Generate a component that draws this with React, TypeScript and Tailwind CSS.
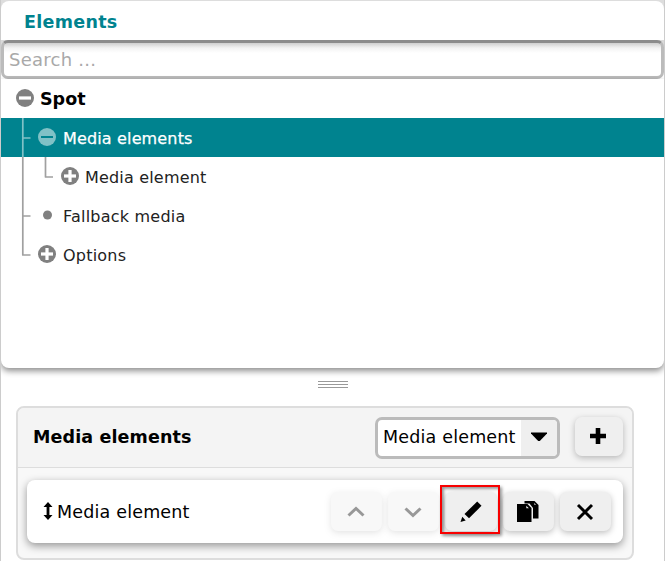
import type { ReactNode } from "react";

type Glyph = "plus" | "minus" | "dot";

function NodeIcon({ glyph, light }: { glyph: Glyph; light?: boolean }) {
  const fill = light ? "#80c1c6" : "#808080";
  const mark = light ? "#00838f" : "#ffffff";
  return (
    <svg width="18" height="18" viewBox="0 0 18 18" className="mb-[2px] shrink-0">
      {glyph === "dot" ? (
        <circle cx="9.5" cy="9" r="4.5" fill={fill} />
      ) : (
        <>
          <circle cx="9" cy="9" r="9" fill={fill} />
          <rect x="3" y={light ? 8 : 7.4} width="12" height={light ? 2 : 3.2} fill={mark} />
          {glyph === "plus" && <rect x="7.4" y="3" width="3.2" height="12" fill={mark} />}
        </>
      )}
    </svg>
  );
}

function TreeLine({ d, light }: { d: string; light?: boolean }) {
  return (
    <svg width="31" height="39" viewBox="0 0 31 39" fill="none" className="shrink-0">
      <path d={d} stroke={light ? "#80c1c6" : "#a0a0a0"} strokeWidth="1.7" strokeLinejoin="round" />
    </svg>
  );
}

function IconButton({ children, className = "" }: { children: ReactNode; className?: string }) {
  return (
    <button
      className={`flex h-[39px] shrink-0 items-center justify-center rounded-[7px] bg-[#efefef] shadow-[0_2px_6px_rgba(0,0,0,0.25)] ${className}`}
    >
      {children}
    </button>
  );
}

export default function App() {
  return (
    <div className="h-[561px] w-[665px] overflow-hidden border-x border-[#cccccc] bg-white font-['DejaVu_Sans',sans-serif] text-base text-black">
      <div className="bg-[#dddddd] pt-px">
        <div className="h-[39px] rounded-t-[8px] bg-white pl-[23px] text-[17.5px] leading-[43px] font-bold tracking-[0.3px] text-[#00838f]">
          Elements
        </div>
      </div>
      <div className="bg-white">
        <div className="h-[39px] bg-[linear-gradient(#dadada_0,#dadada_6px,#fff_7px)]">
          <div className="flex h-[39px] items-center rounded-[7px] border-[3px] border-[#bbbbbb] border-t-[#8c8c8c] bg-[linear-gradient(#cfcfcf,#f3f3f3_5px,#fff_10px)] pl-[5px] text-[18px] tracking-[0.25px] text-[#a9a9a9]">
            Search ...
          </div>
        </div>
      </div>
      <div className="h-[289px] rounded-b-[8px] bg-white shadow-[0_3px_6px_rgba(0,0,0,0.45)]">
        <div className="flex h-[39px] items-center pl-[15px]">
          <NodeIcon glyph="minus" />
          <span className="ml-[6px] pt-px text-[17.5px] font-bold">Spot</span>
        </div>
        <div className="flex h-[39px] items-center bg-[#00838f] text-white">
          <TreeLine d="M21.8 0V39M22 20H29.5" light />
          <span className="ml-[6px] flex items-center gap-[7px]">
            <NodeIcon glyph="minus" light />
            <span className="pt-[2px] text-[16px] tracking-[0.15px] [-webkit-text-stroke:0.25px_white]">Media elements</span>
          </span>
        </div>
        <div className="flex h-[39px] items-center text-[#222222]">
          <svg width="53" height="39" viewBox="0 0 53 39" fill="none" className="shrink-0">
            <path d="M21.8 0V39M44.5 0V20H52" stroke="#a0a0a0" strokeWidth="1.7" strokeLinejoin="round" />
          </svg>
          <span className="ml-[7px] flex items-center gap-[6px]">
            <NodeIcon glyph="plus" />
            <span className="pt-[2px] text-[16px] tracking-[0.18px]">Media element</span>
          </span>
        </div>
        <div className="flex h-[39px] items-center text-[#222222]">
          <TreeLine d="M21.8 0V39M22 20H29.5" />
          <span className="ml-[6px] flex items-center gap-[7px]">
            <NodeIcon glyph="dot" />
            <span className="pt-[2px] text-[16px] tracking-[0.22px]">Fallback media</span>
          </span>
        </div>
        <div className="flex h-[39px] items-center text-[#222222]">
          <TreeLine d="M21.8 0V20H29.5" />
          <span className="ml-[6px] flex items-center gap-[7px]">
            <NodeIcon glyph="plus" />
            <span className="pt-[2px] text-[16px] tracking-[0.22px]">Options</span>
          </span>
        </div>
      </div>
      <div className="flex h-[38px] justify-center pt-[13px]">
        <div className="h-[7px] w-[30px] border-y border-[#999999]">
          <div className="mt-[2px] h-px bg-[#999999]" />
        </div>
      </div>
      <div className="ml-[15px] h-[154px] w-[618px] rounded-[8px] border-2 border-[#dddddd] bg-[#f8f8f8]">
        <div className="flex h-[60px] items-center rounded-t-[6px] border-b border-[#dddddd] bg-[#f4f4f4] pr-[9px] pl-[15px]">
          <span className="flex-1 text-[17.5px] font-bold tracking-[0.13px]">Media elements</span>
          <div className="mt-px flex h-[42px] w-[185px] overflow-hidden rounded-[7px] border-[3px] border-[#bbbbbb] bg-white">
            <span className="w-[143px] pl-[5px] text-[17.5px] leading-[34px] tracking-[0.18px] whitespace-nowrap">Media element</span>
            <span className="flex flex-1 items-center justify-center bg-[#efefef] pb-[2px]">
              <svg width="18" height="10" viewBox="0 0 18 10">
                <path d="M1 .5H17V1.5L9.8 9H8.2L1 1.5Z" fill="#000" />
              </svg>
            </span>
          </div>
          <IconButton className="mb-[2px] ml-[15px] w-[48px]">
            <svg width="18" height="18" viewBox="0 0 18 18" className="mb-[2px] -ml-[2px]">
              <path d="M6.7 1H11.3V6.7H17V11.3H11.3V17H6.7V11.3H1V6.7H6.7Z" fill="#000" />
            </svg>
          </IconButton>
        </div>
        <div className="mx-[9px] mt-[12px] flex h-[63px] items-center rounded-[8px] bg-white pr-[12px] pl-[16px] shadow-[0_3px_8px_rgba(0,0,0,0.4)]">
          <svg width="10" height="18" viewBox="0 0 10 18" className="mb-px shrink-0">
            <path d="M5 0L9.5 5H6.4V13H9.5L5 18L.5 13H3.6V5H.5Z" fill="#000" />
          </svg>
          <span className="ml-[4px] flex-1 pt-px text-[17.5px] tracking-[0.18px] whitespace-nowrap">Media element</span>
          <div className="flex gap-[6px]">
            <IconButton className="w-[51px] opacity-40">
              <svg width="18" height="12" viewBox="0 0 18 12" fill="none" className="-ml-px">
                <path d="M1.5 9.5L9 2.5L16.5 9.5" stroke="#000" strokeWidth="3" />
              </svg>
            </IconButton>
            <IconButton className="w-[51px] opacity-40">
              <svg width="18" height="12" viewBox="0 0 18 12" fill="none" className="-ml-px">
                <path d="M1.5 2.5L9 9.5L16.5 2.5" stroke="#000" strokeWidth="3" />
              </svg>
            </IconButton>
            <div className="relative">
              <IconButton className="w-[52px]">
                <svg width="24" height="24" viewBox="0 0 24 24">
                  <path d="M18.2 1.5L22.5 5.8L10 18.3L5.5 14Z" fill="#000" />
                  <path d="M3.3 16.8L1.5 22L6.7 20.5Z" fill="#000" />
                </svg>
              </IconButton>
              <div className="absolute -top-[7px] -left-[5px] h-[49px] w-[60px] border-2 border-[#f80000] shadow-[2px_2px_3px_rgba(0,0,0,0.4),inset_2px_2px_3px_rgba(0,0,0,0.4)]" />
            </div>
            <IconButton className="w-[51px]">
              <svg width="24" height="24" viewBox="0 0 24 24" className="-ml-px">
                <path d="M8.5 1H18.5L22.5 5V18.5H17V8L13.5 3.5H8.5Z" fill="#000" />
                <path d="M1 4H11.5L15.5 8V22H1Z" fill="#000" />
                <path d="M10.3 5.7V8.3H12.9ZM18.3 3V4.7H20Z" fill="#efefef" />
              </svg>
            </IconButton>
            <IconButton className="w-[51px]">
              <svg width="18" height="18" viewBox="0 0 18 18" fill="none" className="-ml-px">
                <path d="M2 2L16 16M16 2L2 16" stroke="#000" strokeWidth="2.9" />
              </svg>
            </IconButton>
          </div>
        </div>
      </div>
    </div>
  );
}
